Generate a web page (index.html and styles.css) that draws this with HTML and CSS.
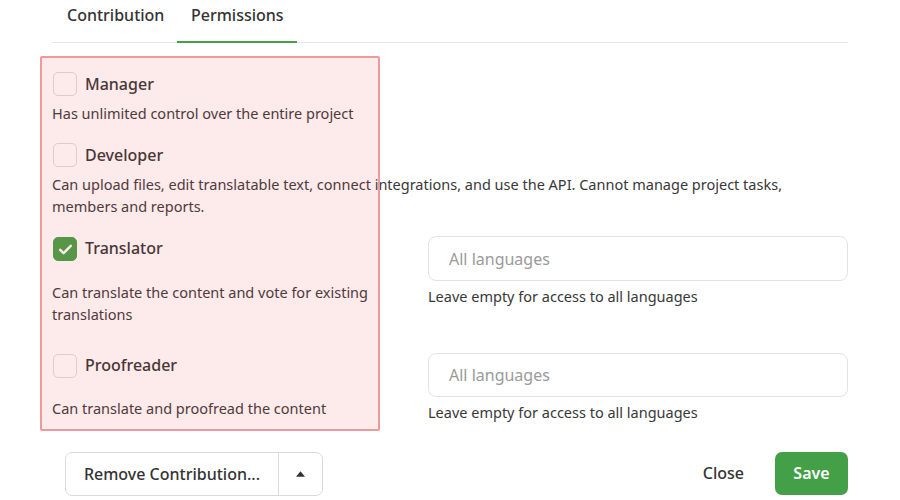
FILE: index.html
```html
<!DOCTYPE html>
<html lang="en">
<head>
    <meta charset="UTF-8">
    <title>Permissions</title>
    <link rel="stylesheet" href="styles.css">
</head>
<body>
    <div class="dialog">
        <div class="tabs">
            <div class="tab">Contribution</div>
            <div class="tab active">Permissions</div>
        </div>

        <div class="perms">
            <div class="highlight"></div>

            <div class="perm perm-manager">
                <label class="check-row">
                    <span class="box"></span>
                    <span class="name">Manager</span>
                </label>
                <p class="desc wide">Has unlimited control over the entire project</p>
            </div>

            <div class="perm perm-developer">
                <label class="check-row">
                    <span class="box"></span>
                    <span class="name">Developer</span>
                </label>
                <p class="desc wide">Can upload files, edit translatable text, connect integrations, and use the API. Cannot manage project tasks, members and reports.</p>
            </div>

            <div class="perm perm-lang perm-translator">
                <label class="check-row">
                    <span class="box checked">
                        <svg viewBox="0 0 24 24" width="17" height="17"><path d="M4.5 12.5l4.8 4.6L19.5 7" fill="none" stroke="#fff" stroke-width="3.6" stroke-linecap="round" stroke-linejoin="round"/></svg>
                    </span>
                    <span class="name">Translator</span>
                </label>
                <div class="lang-input">All languages</div>
                <p class="desc">Can translate the content and vote for existing translations</p>
                <p class="hint">Leave empty for access to all languages</p>
            </div>

            <div class="perm perm-lang perm-proofreader">
                <label class="check-row">
                    <span class="box"></span>
                    <span class="name">Proofreader</span>
                </label>
                <div class="lang-input">All languages</div>
                <p class="desc">Can translate and proofread the content</p>
                <p class="hint">Leave empty for access to all languages</p>
            </div>
        </div>

        <div class="footer">
            <div class="split-btn">
                <button class="btn-main">Remove Contribution...</button>
                <button class="btn-caret"><svg viewBox="0 0 10 6" width="9" height="6"><path d="M0 6L5 0L10 6Z" fill="#333"/></svg></button>
            </div>
            <div class="actions">
                <button class="btn-close">Close</button>
                <button class="btn-save">Save</button>
            </div>
        </div>
    </div>
</body>
</html>
```

FILE: styles.css
```css
* {
    margin: 0;
    padding: 0;
    box-sizing: border-box;
}
body {
    background: #fff;
    font-family: "Noto Sans", "Open Sans", sans-serif;
    color: #333;
    -webkit-font-smoothing: antialiased;
}
.dialog {
    width: 796px;
    margin-left: 52px;
}

/* tabs */
.tabs {
    display: flex;
    height: 43px;
    border-bottom: 1px solid #e6e6e6;
}
.tab {
    padding: 4px 14px 0 15px;
    font-size: 16px;
    font-weight: 500;
    color: #333;
    line-height: 22px;
    width: 125px;
}
.tab.active {
    width: 120px;
    padding-left: 14px;
    border-bottom: 2px solid #43a047;
    margin-bottom: -1px;
}

/* permission list */
.perms {
    position: relative;
    padding-top: 29px;
}
.highlight {
    position: absolute;
    left: -12px;
    top: 13px;
    width: 340px;
    height: 375px;
    border: 2px solid #ef9a9a;
    background: rgba(239, 83, 80, 0.12);
    border-radius: 2px;
    pointer-events: none;
}
.perm {
    margin-bottom: 19px;
}
.check-row {
    display: flex;
    align-items: center;
    gap: 8px;
    height: 24px;
    padding-left: 1px;
}
.box {
    width: 24px;
    height: 24px;
    border: 1px solid #dcdcdc;
    border-radius: 5px;
    background: #fff;
    display: flex;
    align-items: center;
    justify-content: center;
}
.box.checked {
    background: #43a047;
    border-color: #43a047;
}
.name {
    font-size: 16px;
    font-weight: 500;
    color: #333;
}
.desc {
    font-size: 14.5px;
    line-height: 22px;
    color: #383838;
    margin-top: 6px;
}

/* rows with language picker */
.perm-lang {
    display: grid;
    grid-template-columns: 376px 420px;
    margin-bottom: 28px;
}
.perm-lang .check-row {
    height: 45px;
    align-items: flex-start;
    padding-top: 1px;
}
.perm-lang .desc {
    margin-top: 0;
    padding-right: 10px;
}
.perm-proofreader .check-row {
    height: 44px;
}
.lang-input {
    height: 45px;
    border: 1px solid #e3e3e3;
    border-radius: 8px;
    padding: 0 20px;
    display: flex;
    align-items: center;
    font-size: 16px;
    color: #9a9a9a;
}
.perm-proofreader .lang-input {
    height: 44px;
}
.hint {
    font-size: 14.5px;
    line-height: 20px;
    color: #383838;
    margin-top: 5px;
}

/* footer */
.footer {
    display: flex;
    justify-content: space-between;
    align-items: center;
    margin-top: 2px;
    padding-left: 13px;
}
button {
    font-family: inherit;
    background: none;
    border: none;
    cursor: pointer;
}
.split-btn {
    display: flex;
    height: 44px;
    margin-top: 2px;
    border: 1px solid #dadada;
    border-radius: 7px;
}
.btn-main {
    padding: 0;
    font-size: 16px;
    font-weight: 500;
    color: #333;
    white-space: nowrap;
    border-right: 1px solid #dadada;
    width: 213px;
}
.btn-caret {
    width: 43px;
    display: flex;
    align-items: center;
    justify-content: center;
}
.actions {
    display: flex;
    align-items: center;
    gap: 31px;
}
.btn-close {
    font-size: 16px;
    font-weight: 500;
    color: #333;
}
.btn-save {
    width: 73px;
    height: 43px;
    background: #43a047;
    border-radius: 7px;
    color: #fff;
    font-size: 16px;
    font-weight: 600;
}
```
